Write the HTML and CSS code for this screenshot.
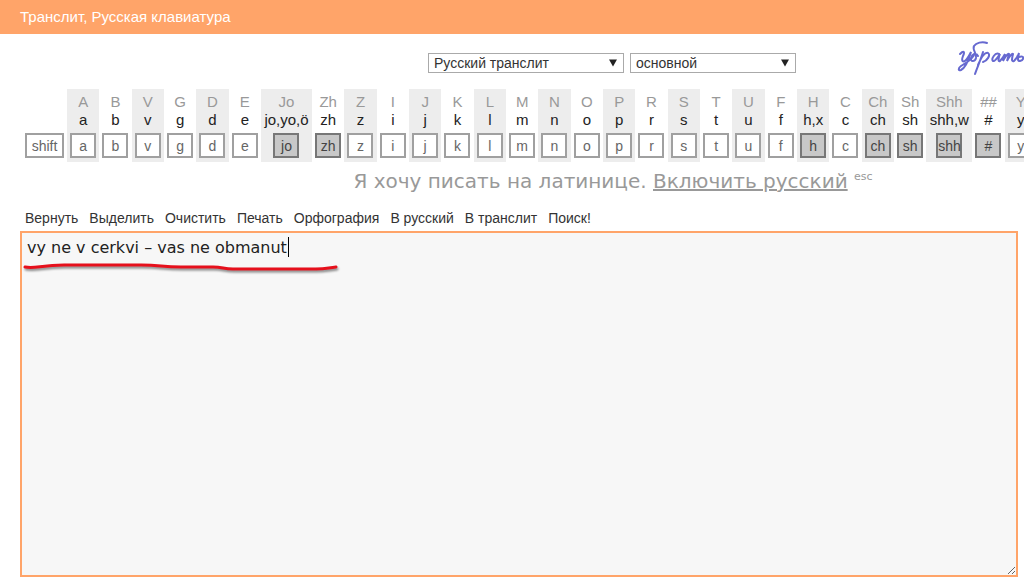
FILE: index.html
```
<!DOCTYPE html>
<html lang="ru">
<head>
<meta charset="utf-8">
<title>Транслит, Русская клавиатура</title>
<link rel="stylesheet" href="styles.css">
</head>
<body>
<header class="topbar">Транслит, Русская клавиатура</header>
<main class="page">
  <div class="options">
    <div class="picker picker-wide">
      <select class="picker-select" aria-label="Раскладка"><option>Русский транслит</option></select>
      <svg class="picker-arrow" viewBox="0 0 8 8" aria-hidden="true"><path d="M0 0.5H8L4 7.5Z"/></svg>
    </div>
    <div class="picker">
      <select class="picker-select" aria-label="Вариант"><option>основной</option></select>
      <svg class="picker-arrow" viewBox="0 0 8 8" aria-hidden="true"><path d="M0 0.5H8L4 7.5Z"/></svg>
    </div>
    <svg class="scrawl" viewBox="0 0 68 36" role="img" aria-label="убрать">
      <path d="M4 14C8 10 9 12 7 16C5 21 7 23 10 20C12 18 14 14 15 12C13 19 9 28 5 30C2 31 2 28 5 26C11 22 16 20 18 15"/>
      <path d="M31 3C26 1 20 3 18 6C16 10 21 13 20 18C19 22 14 22 15 18C16 14 20 12 22 16"/>
      <path d="M27 12C25 19 21 28 19 34M22 25C25 18 29 12 32 13C35 15 31 21 27 22"/>
      <path d="M43 14C39 12 35 19 37 21C39 22 42 17 44 14C42 19 42 22 44 21C47 18 48 16 49 14L47 21C49 17 52 13 53 14L51 21C53 17 56 13 57 14C56 18 55 22 58 21C60 19 62 16 63 13C62 18 61 21 64 21C68 20 69 15 63 17"/>
    </svg>
  </div>

  <div class="keyboard">
    <button class="key shift" type="button">shift</button>
    <div class="keys">
      <div class="col"><span class="upper">A</span><span class="lower">a</span><button class="key" type="button">a</button></div>
      <div class="col"><span class="upper">B</span><span class="lower">b</span><button class="key" type="button">b</button></div>
      <div class="col"><span class="upper">V</span><span class="lower">v</span><button class="key" type="button">v</button></div>
      <div class="col"><span class="upper">G</span><span class="lower">g</span><button class="key" type="button">g</button></div>
      <div class="col"><span class="upper">D</span><span class="lower">d</span><button class="key" type="button">d</button></div>
      <div class="col"><span class="upper">E</span><span class="lower">e</span><button class="key" type="button">e</button></div>
      <div class="col"><span class="upper">Jo</span><span class="lower">jo,yo,ö</span><button class="key dark" type="button">jo</button></div>
      <div class="col"><span class="upper">Zh</span><span class="lower">zh</span><button class="key dark" type="button">zh</button></div>
      <div class="col"><span class="upper">Z</span><span class="lower">z</span><button class="key" type="button">z</button></div>
      <div class="col"><span class="upper">I</span><span class="lower">i</span><button class="key" type="button">i</button></div>
      <div class="col"><span class="upper">J</span><span class="lower">j</span><button class="key" type="button">j</button></div>
      <div class="col"><span class="upper">K</span><span class="lower">k</span><button class="key" type="button">k</button></div>
      <div class="col"><span class="upper">L</span><span class="lower">l</span><button class="key" type="button">l</button></div>
      <div class="col"><span class="upper">M</span><span class="lower">m</span><button class="key" type="button">m</button></div>
      <div class="col"><span class="upper">N</span><span class="lower">n</span><button class="key" type="button">n</button></div>
      <div class="col"><span class="upper">O</span><span class="lower">o</span><button class="key" type="button">o</button></div>
      <div class="col"><span class="upper">P</span><span class="lower">p</span><button class="key" type="button">p</button></div>
      <div class="col"><span class="upper">R</span><span class="lower">r</span><button class="key" type="button">r</button></div>
      <div class="col"><span class="upper">S</span><span class="lower">s</span><button class="key" type="button">s</button></div>
      <div class="col"><span class="upper">T</span><span class="lower">t</span><button class="key" type="button">t</button></div>
      <div class="col"><span class="upper">U</span><span class="lower">u</span><button class="key" type="button">u</button></div>
      <div class="col"><span class="upper">F</span><span class="lower">f</span><button class="key" type="button">f</button></div>
      <div class="col"><span class="upper">H</span><span class="lower">h,x</span><button class="key dark" type="button">h</button></div>
      <div class="col"><span class="upper">C</span><span class="lower">c</span><button class="key" type="button">c</button></div>
      <div class="col"><span class="upper">Ch</span><span class="lower">ch</span><button class="key dark" type="button">ch</button></div>
      <div class="col"><span class="upper">Sh</span><span class="lower">sh</span><button class="key dark" type="button">sh</button></div>
      <div class="col"><span class="upper">Shh</span><span class="lower">shh,w</span><button class="key dark" type="button">shh</button></div>
      <div class="col"><span class="upper">##</span><span class="lower">#</span><button class="key dark" type="button">#</button></div>
      <div class="col"><span class="upper">Y</span><span class="lower">y</span><button class="key" type="button">y</button></div>
    </div>
  </div>

  <p class="mode">Я хочу писать на латинице. <a class="mode-link" href="#">Включить русский</a> <sup class="mode-key">esc</sup></p>

  <nav class="actions">
    <a class="action" href="#">Вернуть</a>
    <a class="action" href="#">Выделить</a>
    <a class="action" href="#">Очистить</a>
    <a class="action" href="#">Печать</a>
    <a class="action" href="#">Орфография</a>
    <a class="action" href="#">В русский</a>
    <a class="action" href="#">В транслит</a>
    <a class="action" href="#">Поиск!</a>
  </nav>

  <div class="editor">
    <textarea class="editor-text" aria-label="Текст" spellcheck="false">vy ne v cerkvi – vas ne obmanut</textarea>
    <span class="caret"></span>
    <svg class="marker" viewBox="0 0 320 14" aria-hidden="true">
      <path d="M4 6C14 8 20 4 43 4H120C140 4 140 6 160 6H192C202 6 202 8 212 8H295C305 8 306 7 315 6"/>
    </svg>
  </div>
</main>
</body>
</html>
```
FILE: styles.css
```
* { box-sizing: border-box; }

body {
  margin: 0;
  min-height: 100vh;
  display: flex;
  flex-direction: column;
  overflow: hidden;
  background: #fff;
  color: #333;
  font-family: "Liberation Sans", Arial, sans-serif;
  font-size: 15px;
}

.topbar {
  height: 34px;
  padding-left: 20px;
  background: #ffa469;
  color: #fff;
  line-height: 33px;
}

.page {
  flex: 1;
  display: flex;
  flex-direction: column;
  padding: 19px 0 8px;
}

.options {
  position: relative;
  display: flex;
  justify-content: center;
  gap: 6px;
  padding-left: 200px;
}

.picker { position: relative; width: 166px; }
.picker-wide { width: 196px; }

.picker-select {
  display: block;
  width: 100%;
  height: 20px;
  padding: 0 5px;
  border: 1px solid #aaa;
  border-radius: 0;
  background: #fff;
  color: #333;
  font: inherit;
  font-size: 14px;
  line-height: 18px;
  appearance: none;
}

.picker-arrow {
  position: absolute;
  top: 6px;
  right: 7px;
  width: 8px;
  height: 8px;
  fill: #222;
  pointer-events: none;
}

.scrawl {
  position: absolute;
  top: -13px;
  right: 0;
  width: 68px;
  height: 36px;
  fill: none;
  stroke: #6669d0;
  stroke-width: 2;
  stroke-linecap: round;
}

.keyboard {
  display: flex;
  align-items: flex-end;
  gap: 3px;
  margin: 16px -13px 0 25px;
}

.keys {
  flex: 1;
  display: grid;
  grid-template-columns: repeat(6, 1fr) 51px repeat(19, 1fr) 46px repeat(2, 1fr);
}

.col {
  display: flex;
  flex-direction: column;
  align-items: center;
  min-width: 0;
  padding: 4px 0;
  line-height: 18px;
}

.col:nth-child(odd) { background: #ededed; }
.upper { color: #999; }
.lower { color: #222; margin-bottom: 4px; }

.key {
  width: 26px;
  height: 25px;
  padding: 0;
  border: 2px solid #a0a0a0;
  background: #fff;
  color: #666;
  font: inherit;
  font-size: 14px;
}

.shift { width: 39px; margin-bottom: 4px; }
.dark { border-color: #777; background: #c8c8c8; color: #444; }

.mode {
  margin: 4px 0 0;
  padding-left: 202px;
  color: #999;
  font-family: "DejaVu Sans", Verdana, sans-serif;
  font-size: 20px;
  line-height: 30px;
  text-align: center;
}

.mode-link { color: #999; }
.mode-key { font-size: 11px; line-height: 1; }

.actions {
  display: flex;
  gap: 11px;
  padding: 12px 0 0 25px;
  line-height: 20px;
}

.action { color: #333; font-size: 14px; text-decoration: none; }

.editor {
  position: relative;
  flex: 1;
  display: flex;
  margin: 3px 6px 0 20px;
}

.editor-text {
  flex: 1;
  padding: 4px 5px;
  border: 2px solid #ffa469;
  outline: 0;
  background: #f7f7f7;
  color: #222;
  font-family: "DejaVu Sans", Verdana, sans-serif;
  font-size: 16px;
  line-height: 22px;
}

.caret {
  position: absolute;
  left: 268px;
  top: 6px;
  width: 1px;
  height: 20px;
  background: #000;
}

.marker {
  position: absolute;
  left: 1px;
  top: 30px;
  width: 320px;
  height: 14px;
  fill: none;
  stroke: #e6101c;
  stroke-width: 3;
  stroke-linecap: round;
  filter: drop-shadow(1px 2px 1px #888);
  pointer-events: none;
}
```
